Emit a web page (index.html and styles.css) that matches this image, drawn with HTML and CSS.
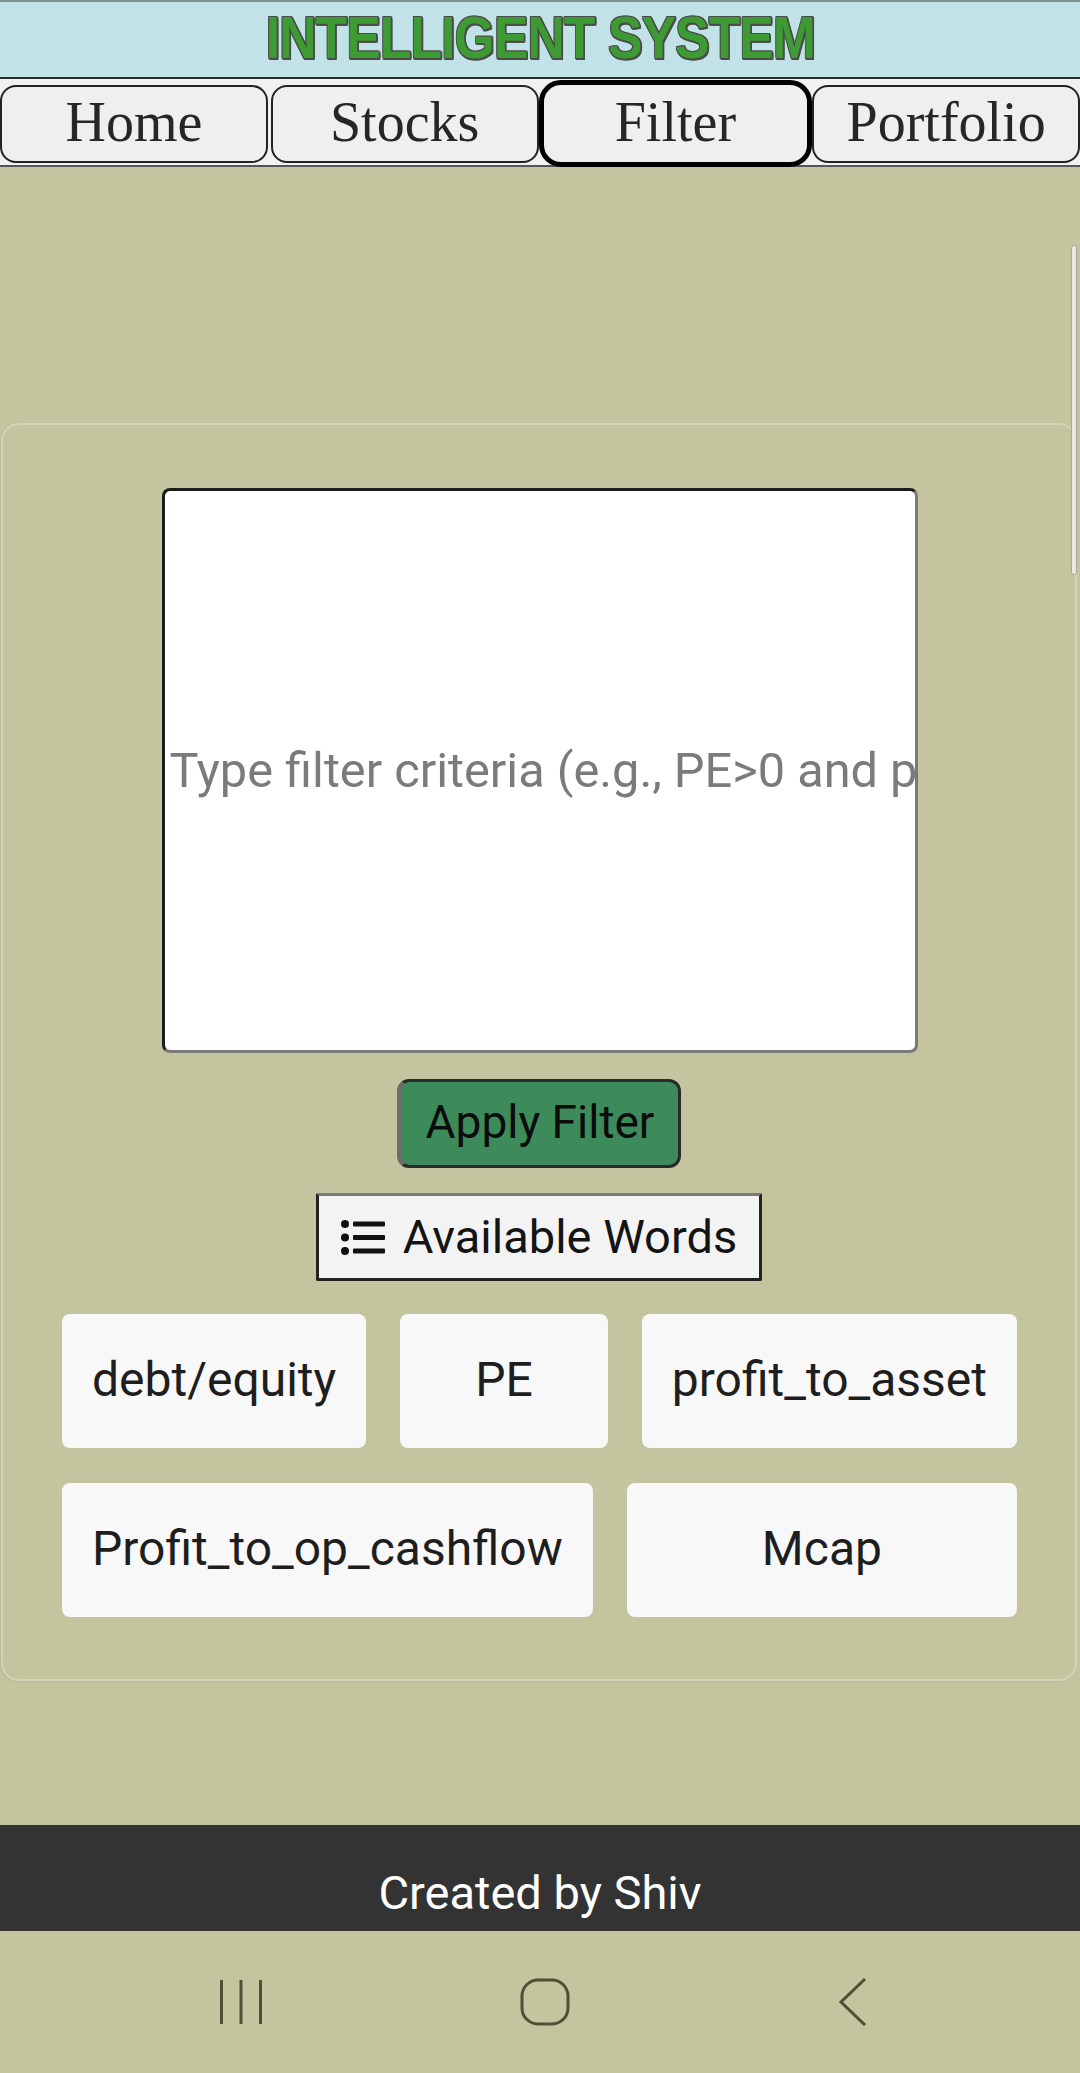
FILE: index.html
```html
<!DOCTYPE html>
<html lang="en">
<head>
<meta charset="utf-8">
<title>Intelligent System - Filter</title>
<link rel="stylesheet" href="styles.css">
</head>
<body>
<header class="app-header">
  <h1 class="title"><span class="title-text">INTELLIGENT SYSTEM</span></h1>
</header>
<nav class="tabs">
  <a class="tab">Home</a>
  <a class="tab">Stocks</a>
  <a class="tab tab-active">Filter</a>
  <a class="tab">Portfolio</a>
</nav>
<main class="main">
  <section class="card">
    <input class="criteria" type="text" placeholder="Type filter criteria (e.g., PE&gt;0 and profit_to_asset&gt;0)">
    <button class="apply-btn">Apply Filter</button>
    <button class="words-btn">
      <svg class="list-icon" width="44" height="37" viewBox="0 0 44 37">
        <circle cx="4" cy="5" r="4" fill="#111"/>
        <circle cx="4" cy="18.5" r="4" fill="#111"/>
        <circle cx="4" cy="32" r="4" fill="#111"/>
        <rect x="12" y="2.5" width="32" height="5" rx="1" fill="#111"/>
        <rect x="12" y="16" width="32" height="5" rx="1" fill="#111"/>
        <rect x="12" y="29.5" width="32" height="5" rx="1" fill="#111"/>
      </svg>
      <span>Available Words</span>
    </button>
    <div class="chips">
      <span class="chip">debt/equity</span>
      <span class="chip">PE</span>
      <span class="chip">profit_to_asset</span>
      <span class="chip">Profit_to_op_cashflow</span>
      <span class="chip">Mcap</span>
    </div>
  </section>
</main>
<footer class="footer">Created by Shiv</footer>
<div class="sysnav">
  <svg class="sys-icon" width="48" height="48" viewBox="0 0 48 48">
    <rect x="3" y="2" width="3" height="44" fill="#4f4f36"/>
    <rect x="22.5" y="2" width="3" height="44" fill="#4f4f36"/>
    <rect x="42" y="2" width="3" height="44" fill="#4f4f36"/>
  </svg>
  <svg class="sys-icon" width="50" height="48" viewBox="0 0 50 48">
    <rect x="2" y="2" width="46" height="44" rx="16" ry="16" fill="none" stroke="#4f4f36" stroke-width="3"/>
  </svg>
  <svg class="sys-icon" width="30" height="48" viewBox="0 0 30 48">
    <polyline points="27,1 3,24 27,47" fill="none" stroke="#4f4f36" stroke-width="3"/>
  </svg>
</div>
<div class="scrollbar"></div>
</body>
</html>
```

FILE: styles.css
```css
* {
  box-sizing: border-box;
}

html, body {
  margin: 0;
  padding: 0;
}

body {
  width: 1080px;
  min-height: 2073px;
  background: #c4c49f;
  font-family: Roboto, "Liberation Sans", Arial, sans-serif;
  position: relative;
  overflow: hidden;
}

/* Header */
.app-header {
  height: 79px;
  background: #c1e2e6;
  border-top: 2px solid #7f9090;
  border-bottom: 2px solid #2e2e2e;
  display: flex;
  align-items: center;
  justify-content: center;
}

.title {
  margin: 0;
  font-family: "Liberation Sans", Arial, sans-serif;
  font-weight: 700;
  font-size: 60px;
  line-height: 1;
  padding-bottom: 4px;
}

.title-text {
  display: inline-block;
  color: #3e9a33;
  letter-spacing: -1px;
  transform: scaleX(0.86);
  text-shadow: 2px 2px 0 #4a4a4a, -1px -1px 0 #4a4a4a, 1px -1px 0 #4a4a4a, -1px 1px 0 #4a4a4a, 2px 0 0 #4a4a4a, 0 2px 0 #4a4a4a;
}

/* Tabs */
.tabs {
  display: grid;
  grid-template-columns: repeat(4, 1fr);
  column-gap: 3px;
  padding: 6px 0 2px;
  background: #f1f1f1;
  border-bottom: 2px solid #555;
}

.tab {
  height: 78px;
  display: flex;
  align-items: center;
  justify-content: center;
  background: #efefef;
  border: 2px solid #222;
  border-radius: 16px;
  font-family: "Liberation Serif", "Times New Roman", serif;
  font-size: 56px;
  color: #262626;
  padding-bottom: 4px;
}

.tab-active {
  height: 87px;
  margin: -5px -3px -4px -3px;
  border: 5px solid #000;
  border-radius: 22px;
  position: relative;
  z-index: 1;
}

/* Main */
.main {
  padding: 256px 0 144px;
}

.card {
  margin: 0 3px 0 1px;
  border: 2px solid #d3d3b8;
  border-radius: 18px;
  padding: 63px 0 62px;
  display: flex;
  flex-direction: column;
  align-items: center;
  box-shadow: -1px 1px 2px rgba(0, 0, 0, 0.06);
}

.criteria {
  width: 756px;
  height: 565px;
  margin: 0 0 0 1px;
  padding: 0 0 0 5px;
  background: #fff;
  border: 3px solid #1c1c1c;
  border-right-color: #7a7a7a;
  border-bottom-color: #7a7a7a;
  border-radius: 8px;
  font-family: Roboto, "Liberation Sans", sans-serif;
  font-size: 48.7px;
  color: #222;
  outline: none;
}

.criteria::placeholder {
  color: #7b7b7b;
}

.apply-btn {
  margin-top: 26px;
  height: 89px;
  padding: 0 24px 4px;
  background: #3d8b5a;
  border: 3px solid #2a2a2a;
  border-left-color: #6d6d6d;
  border-left-width: 5px;
  border-radius: 12px;
  font-family: Roboto, "Liberation Sans", sans-serif;
  font-size: 46px;
  color: #0c0c0c;
}

.words-btn {
  margin-top: 25px;
  height: 88px;
  padding: 0 22px 2px;
  display: flex;
  align-items: center;
  gap: 18px;
  background: #f3f3f3;
  border: 3px solid #222;
  border-top-color: #7a7a7a;
  border-radius: 2px;
  font-family: Roboto, "Liberation Sans", sans-serif;
  font-size: 47px;
  color: #141414;
}

.list-icon {
  flex: none;
  margin-top: 2px;
}

.chips {
  align-self: stretch;
  margin-top: 33px;
  padding: 0 58px 0 59px;
  display: flex;
  flex-wrap: wrap;
  column-gap: 34px;
  row-gap: 35px;
}

.chip {
  flex: 1 1 196px;
  height: 134px;
  padding: 0 30px 4px;
  display: flex;
  align-items: center;
  justify-content: center;
  background: #f8f8f8;
  border-radius: 8px;
  font-size: 48px;
  color: #1e1e1e;
  white-space: nowrap;
}

/* Footer */
.footer {
  height: 106px;
  background: #333;
  color: #fff;
  display: flex;
  align-items: center;
  justify-content: center;
  padding-top: 28px;
  font-size: 47px;
}

/* System navigation bar */
.sysnav {
  height: 142px;
  display: flex;
  align-items: center;
  padding: 0 0 0 217px;
}

.sysnav .sys-icon:nth-child(1) {
  margin-right: 255px;
}

.sysnav .sys-icon:nth-child(2) {
  margin-right: 268px;
}

/* Overlay scrollbar */
.scrollbar {
  position: absolute;
  top: 245px;
  right: 3px;
  width: 6px;
  height: 330px;
  background: #e9e9e2;
  border: 1px solid #a9a9a0;
  border-radius: 3px;
}
```
